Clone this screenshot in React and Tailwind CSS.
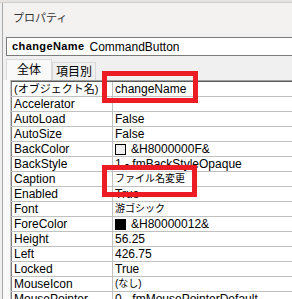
const ROWS = [
  ["(オブジェクト名)", "changeName", null, true],
  ["Accelerator", ""],
  ["AutoLoad", "False"],
  ["AutoSize", "False"],
  ["BackColor", "&H8000000F&", "light"],
  ["BackStyle", "1 - fmBackStyleOpaque"],
  ["Caption", "ファイル名変更", null, false, true],
  ["Enabled", "True"],
  ["Font", "游ゴシック", null, false, true],
  ["ForeColor", "&H80000012&", "dark"],
  ["Height", "56.25"],
  ["Left", "426.75"],
  ["Locked", "True"],
  ["MouseIcon", "(なし)", null, false, true],
  ["MousePointer", "0 - fmMousePointerDefault"],
]

const FONT = { fontFamily: '"Liberation Sans", "Noto Sans CJK JP", sans-serif' }

export default function App() {
  return (
    <div className="relative w-[292px] h-[299px] overflow-hidden bg-[#f0f0f0] text-[12px] text-black" style={FONT}>
      {/* window behind */}
      <div className="h-[3px] bg-[#e6e3e0] border-b border-[#d0d0d0]" />

      <div className="ml-[2px] border-l border-[#a8a8a8] h-full">
        {/* title */}
        <div className="h-[31px] bg-[#f4f2f0] flex items-center pl-[10px] text-[11px] text-[#333]">
          プロパティ
        </div>

        {/* object box */}
        <div className="mt-[3px] ml-[3px] h-[19px] bg-white border border-[#7a7a7a] border-r-0 flex items-center pl-[5px] leading-none">
          <span className="font-bold text-[11px] tracking-[0.4px]">changeName</span>
          <span className="ml-[5px] text-[12px]">CommandButton</span>
        </div>

        {/* tabs */}
        <div className="flex items-end h-[22px] ml-[3px] mt-[2px]">
          <div className="w-[46px] h-[21px] bg-[#f9f9f9] border border-b-0 border-[#d9d9d9] flex items-center justify-center text-[12px]">
            全体
          </div>
          <div className="w-[44px] h-[18px] bg-[#f0f0f0] border border-b-0 border-[#d9d9d9] flex items-center justify-center text-[12px]">
            項目別
          </div>
        </div>

        {/* grid */}
        <div className="flex bg-[#f9f9f9]">
          <div className="w-[8px] border-r border-[#c8c8c8]" />
          <div className="flex-1 border-t border-[#a0a0a0]">
            <div className="border-t border-[#5a5a5a] bg-white">
              {ROWS.map(([k, v, sw, kj, vj]) => (
                <div key={k} className="flex h-[15px] border-b border-[#c0c0c0] leading-[14px]">
                  <div
                    className={`w-[102px] shrink-0 pl-[2px] border-r border-[#c0c0c0] whitespace-nowrap overflow-hidden border-l border-l-[#808080] ${kj ? "text-[11px]" : ""}`}
                  >
                    {k}
                  </div>
                  <div
                    className={`flex-1 pl-[2px] whitespace-nowrap overflow-hidden flex items-center ${vj ? "text-[10px]" : ""}`}
                  >
                    {sw && (
                      <span
                        className={`inline-block w-[11px] h-[11px] border border-black mr-[5px] ${sw === "dark" ? "bg-black" : "bg-[#f0f0f0]"}`}
                      />
                    )}
                    {v}
                  </div>
                </div>
              ))}
            </div>
          </div>
        </div>
      </div>

      {/* red highlight boxes */}
      <div className="absolute left-[102px] top-[71px] w-[96px] h-[32px] border-[5px] border-[#ed1c24]" />
      <div className="absolute left-[102px] top-[165px] w-[95px] h-[32px] border-[5px] border-[#ed1c24]" />
    </div>
  )
}
